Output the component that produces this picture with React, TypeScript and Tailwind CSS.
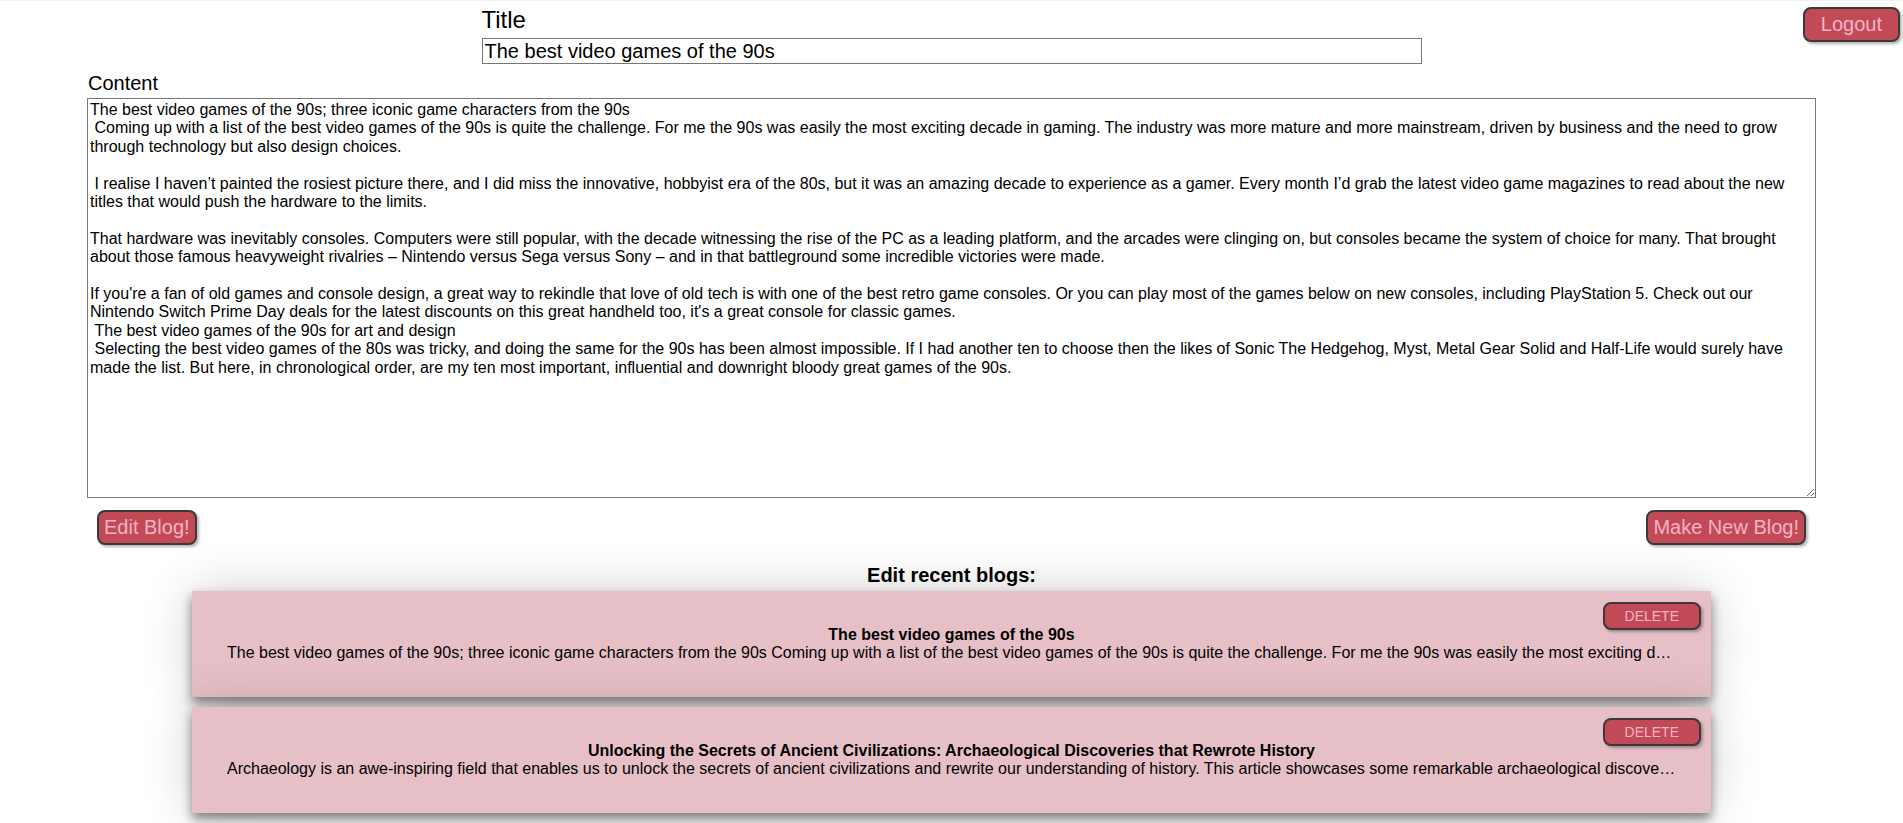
import { useState } from 'react';

const initialContent = `The best video games of the 90s; three iconic game characters from the 90s
 Coming up with a list of the best video games of the 90s is quite the challenge. For me the 90s was easily the most exciting decade in gaming. The industry was more mature and more mainstream, driven by business and the need to grow through technology but also design choices.

 I realise I haven’t painted the rosiest picture there, and I did miss the innovative, hobbyist era of the 80s, but it was an amazing decade to experience as a gamer. Every month I’d grab the latest video game magazines to read about the new titles that would push the hardware to the limits.

That hardware was inevitably consoles. Computers were still popular, with the decade witnessing the rise of the PC as a leading platform, and the arcades were clinging on, but consoles became the system of choice for many. That brought about those famous heavyweight rivalries – Nintendo versus Sega versus Sony – and in that battleground some incredible victories were made.

If you're a fan of old games and console design, a great way to rekindle that love of old tech is with one of the best retro game consoles. Or you can play most of the games below on new consoles, including PlayStation 5. Check out our Nintendo Switch Prime Day deals for the latest discounts on this great handheld too, it's a great console for classic games.
 The best video games of the 90s for art and design
 Selecting the best video games of the 80s was tricky, and doing the same for the 90s has been almost impossible. If I had another ten to choose then the likes of Sonic The Hedgehog, Myst, Metal Gear Solid and Half-Life would surely have made the list. But here, in chronological order, are my ten most important, influential and downright bloody great games of the 90s.`;

const blogs = [
  {
    id: 1,
    title: 'The best video games of the 90s',
    content: initialContent.replace(/\s+/g, ' ')
  },
  {
    id: 2,
    title: 'Unlocking the Secrets of Ancient Civilizations: Archaeological Discoveries that Rewrote History',
    content: 'Archaeology is an awe-inspiring field that enables us to unlock the secrets of ancient civilizations and rewrite our understanding of history. This article showcases some remarkable archaeological discoveries that have reshaped our knowledge of the past and shed light on the lives of people who came before us.'
  },
]

const btn = 'bg-[#c14a56] text-[#f3b3c7] border-2 border-[#3a3a3a] rounded-[8px] shadow-[2px_2px_3px_rgba(0,0,0,0.3)] cursor-pointer';

export default function App() {
  const [title, setTitle] = useState('The best video games of the 90s');
  const [content, setContent] = useState(initialContent);

  return (
    <div className="relative min-h-[823px] bg-white text-black font-['Liberation_Sans',Arial,sans-serif]">
      <div className="h-px bg-[#f2f2f2]"></div>

      <button className={`absolute top-[7px] right-[3px] px-[16px] py-[4px] text-[20px] leading-[23px] ${btn}`}>
        Logout
      </button>

      <div className="mx-auto w-[940px] pt-[5px]">
        <label className="block text-[24px] leading-[27px] mb-[5px]">Title</label>
        <input
          value={title}
          onChange={e => setTitle(e.target.value)}
          className="block w-full h-[26px] border border-[#767676] px-[2px] text-[20px] leading-[23px] outline-none"
        />
      </div>

      <div className="mx-auto w-[1729px] mt-[8px]">
        <label className="block text-[20px] leading-[23px] mb-[3px] pl-px">Content</label>
        <textarea
          value={content}
          onChange={e => setContent(e.target.value)}
          className="block w-full h-[400px] border border-[#767676] p-[2px] text-[16px] leading-[18.4px] outline-none"
        />
        <div className="flex justify-between px-[10px] mt-[12px]">
          <button className={`px-[5px] py-[4px] text-[20px] leading-[23px] ${btn}`}>Edit Blog!</button>
          <button className={`px-[5px] py-[4px] text-[20px] leading-[23px] ${btn}`}>Make New Blog!</button>
        </div>
      </div>

      <h3 className="text-center font-bold text-[20px] leading-[23px] mt-[19px] mb-[4px]">Edit recent blogs:</h3>

      <div className="flex flex-col gap-[10px] pb-[10px]">
        {blogs.map(blog => (
          <div
            key={blog.id}
            className="relative mx-auto w-[1519px] h-[106px] bg-[#e7c0c7] px-[35px] flex flex-col justify-center shadow-[0_6px_10px_rgba(0,0,0,0.45),0_0_50px_rgba(0,0,0,0.2)]"
          >
            <button className={`absolute top-[11px] right-[10px] px-[20px] py-[4px] text-[14px] leading-[16px] ${btn}`}>
              DELETE
            </button>
            <h4 className="text-center font-bold text-[16px] leading-[18px]">{blog.title}</h4>
            <p className="text-[16px] leading-[18px] whitespace-nowrap overflow-hidden text-ellipsis">{blog.content}</p>
          </div>
        ))}
      </div>
    </div>
  )
}
